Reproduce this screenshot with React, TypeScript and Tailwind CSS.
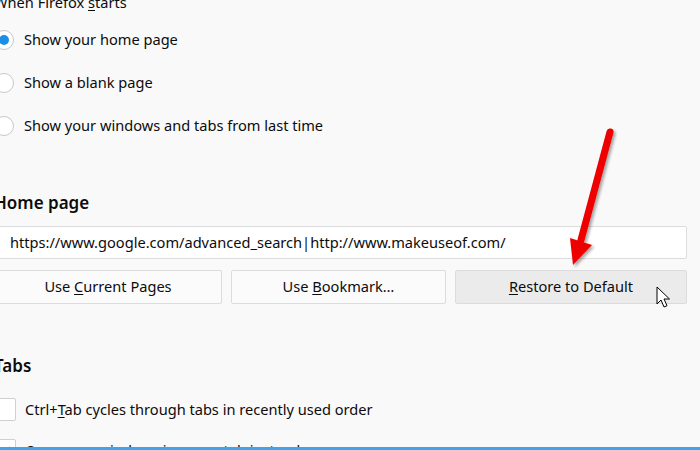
import React from 'react'

const font = { fontFamily: '"Noto Sans", "Open Sans", Arial, sans-serif' }

function Radio({ checked, label }: { checked?: boolean; label: string }) {
  return (
    <div className="flex h-[43px] items-center gap-[10px]">
      <span className="flex h-[20px] w-[20px] shrink-0 items-center justify-center rounded-full border border-[#c8c8ca] bg-white">
        {checked && <span className="h-[10px] w-[10px] rounded-full bg-[#1a8fe3]" />}
      </span>
      <span>{label}</span>
    </div>
  )
}

function Check({ checked, children }: { checked?: boolean; children: React.ReactNode }) {
  return (
    <div className="flex h-[41px] items-center gap-[9px]">
      <span className="flex h-[23px] w-[22px] shrink-0 items-center justify-center rounded-[2px] border border-[#d0d0d2] bg-white">
        {checked && (
          <svg width="14" height="14" viewBox="0 0 14 14">
            <path d="M2 7.5l3 3L12 3" fill="none" stroke="#1a8fe3" strokeWidth="1.6" />
          </svg>
        )}
      </span>
      <span>{children}</span>
    </div>
  )
}

function Btn({ w, hover, children }: { w: string; hover?: boolean; children: React.ReactNode }) {
  return (
    <div
      className={`flex h-[34px] ${w} items-center justify-center rounded-[2px] border border-[#dcdcde] ${
        hover ? 'bg-[#ebebeb]' : 'bg-[#fbfbfb]'
      }`}
    >
      {children}
    </div>
  )
}

export default function App() {
  return (
    <div className="relative h-[450px] w-[700px] overflow-hidden bg-[#f9f9fa] text-[14.6px] text-[#0c0c0d]" style={font}>
      <div className="-ml-[6px] -mt-[10px] flex w-[693px] flex-col">
        <div className="h-[24px] leading-[24px]">
          When Firefox <span className="underline underline-offset-2">s</span>tarts
        </div>
        <div className="mt-[4px] flex flex-col">
          <Radio checked label="Show your home page" />
          <Radio label="Show a blank page" />
          <Radio label="Show your windows and tabs from last time" />
        </div>

        <div className="mt-[43px] h-[26px] text-[17px] font-semibold leading-[26px]">Home page</div>
        <div className="mt-[10px] flex h-[33px] items-center rounded-[2px] border border-[#dcdcde] bg-white pl-[15px]">
          https://www.google.com/advanced_search|http://www.makeuseof.com/
        </div>
        <div className="mt-[11px] flex gap-[9px]">
          <Btn w="w-[228px]">
            Use&nbsp;<span className="underline underline-offset-2">C</span>urrent Pages
          </Btn>
          <Btn w="w-[215px]">
            Use&nbsp;<span className="underline underline-offset-2">B</span>ookmark…
          </Btn>
          <Btn w="w-[232px]" hover>
            <span className="underline underline-offset-2">R</span>estore to Default
          </Btn>
        </div>

        <div className="mt-[49px] h-[26px] text-[17px] font-semibold leading-[26px]">Tabs</div>
        <div className="mt-[10px] flex flex-col">
          <Check>
            Ctrl+<span className="underline underline-offset-2">T</span>ab cycles through tabs in recently used order
          </Check>
          <Check checked>Open new windows in a new tab instead</Check>
        </div>
      </div>

      {/* red annotation arrow */}
      <svg className="pointer-events-none absolute left-0 top-0" width="700" height="450">
        <defs>
          <filter id="sh" x="-20%" y="-20%" width="140%" height="140%">
            <feDropShadow dx="2" dy="2" stdDeviation="1.5" floodColor="#000" floodOpacity="0.35" />
          </filter>
        </defs>
        <g filter="url(#sh)">
          <line x1="610" y1="132" x2="581" y2="240" stroke="#ee0000" strokeWidth="7" strokeLinecap="round" />
          <polygon points="570,238 592,245 573,265" fill="#ee0000" />
        </g>
      </svg>

      {/* mouse cursor */}
      <svg className="pointer-events-none absolute left-[656px] top-[286px]" width="14" height="23" viewBox="0 0 14 23">
        <path d="M1 1v17l4-4 3 7 3-1.3-3-6.7h5.5z" fill="#fff" stroke="#000" strokeWidth="1" strokeLinejoin="round" />
      </svg>

      <div className="absolute bottom-0 left-0 h-[3px] w-full bg-[#3ea6e6]" />
    </div>
  )
}
